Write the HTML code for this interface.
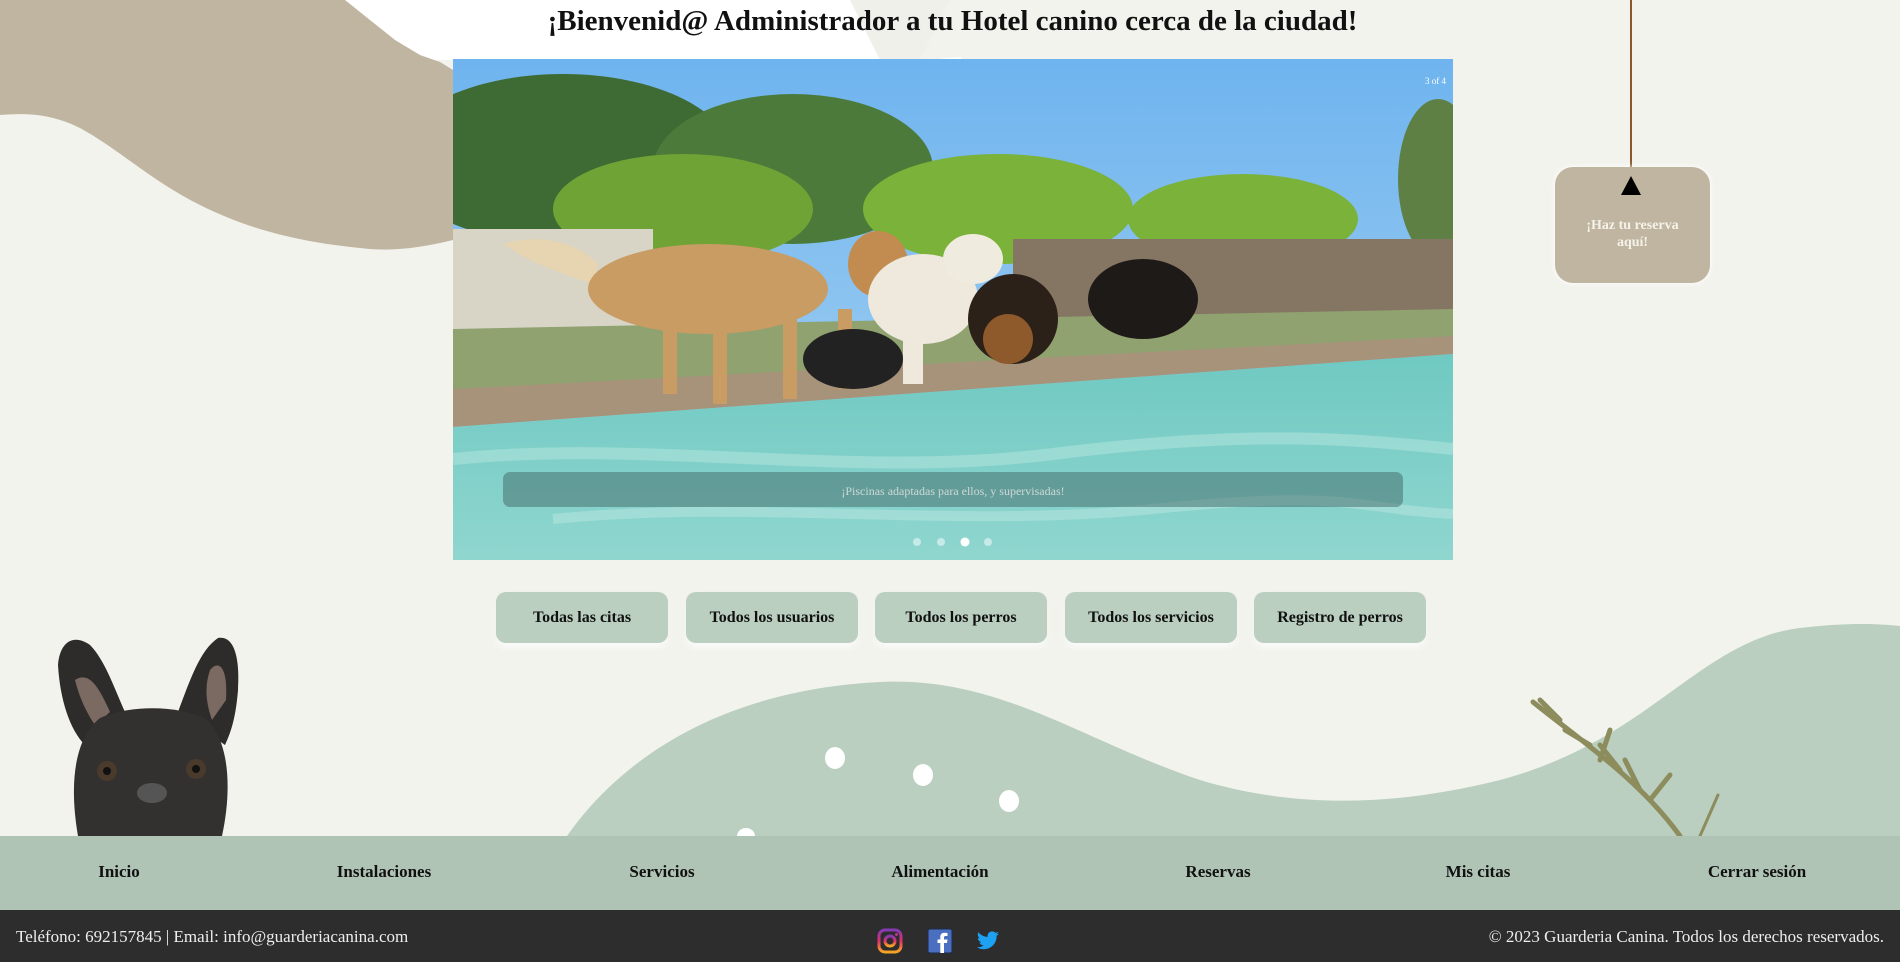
<!DOCTYPE html>
<html><head><meta charset="utf-8"><style>
*{margin:0;padding:0;box-sizing:border-box}
body{width:1900px;height:962px;overflow:hidden;background:#f3f3ee;font-family:"Liberation Serif",serif;position:relative}
.abs{position:absolute}
h1{position:absolute;top:5px;left:0;width:1905px;text-align:center;font-size:29px;font-weight:bold;color:#111;z-index:3}
.btn{position:absolute;top:592px;width:172px;height:51px;background:#bacfc0;border-radius:10px;box-shadow:0 4px 6px rgba(255,255,255,.9),0 2px 4px rgba(0,0,0,.08);font-weight:bold;font-size:16px;text-align:center;line-height:51px;color:#111}
.nav{position:absolute;top:836px;left:0;width:1900px;height:74px;background:#b0c4b6}
.nav span{position:absolute;top:26px;font-size:17px;font-weight:bold;color:#111;transform:translateX(-50%)}
.foot{position:absolute;top:910px;left:0;width:1900px;height:52px;background:#2d2d2d;color:#eee;font-size:17px}
</style></head><body>
<svg class="abs" style="left:0;top:0" width="1900" height="962">
<polygon points="340,0 1000,0 960,60 400,60" fill="#fff"/>
<polygon points="850,0 1000,0 940,60 880,60" fill="#f0f0ea"/>
<polygon points="950,0 1200,0 1200,40 920,60" fill="#f3f3ee"/>
<path d="M0,0 L345,0 L370,20 L395,40 L420,55 L440,62 L453,70 L453,240 C420,248 390,252 360,248 C300,242 250,230 200,205 C150,180 120,150 80,128 C50,113 25,113 0,115 Z" fill="#c0b5a0"/>
<path d="M567,836 C620,760 720,690 880,682 C1000,676 1080,740 1200,780 C1300,810 1400,805 1500,780 C1650,740 1700,640 1800,628 C1850,622 1880,624 1900,626 L1900,836 Z" fill="#bacfc0"/>
<ellipse cx="835" cy="758" rx="10" ry="11" fill="#fff"/>
<ellipse cx="923" cy="775" rx="10" ry="11" fill="#fff"/>
<ellipse cx="1009" cy="801" rx="10" ry="11" fill="#fff"/>
<ellipse cx="746" cy="836" rx="9" ry="8" fill="#fff"/>
<g stroke="#8d8c5c" stroke-width="5" stroke-linecap="round" fill="none">
<path d="M1533,702 C1580,740 1640,780 1680,836"/>
<path d="M1560,720 l-20,-20 M1590,745 l-25,-15 M1620,770 l-20,-25 M1600,760 l10,-30 M1640,790 l-15,-30 M1650,800 l20,-25"/>
<path d="M1700,836 L1718,795" stroke-width="3"/>
</g>
<g>
<path d="M58,665 C60,640 75,634 90,645 C105,660 115,690 125,712 L85,745 C70,730 60,700 58,665 Z" fill="#2e2c2a"/>
<path d="M178,712 C190,680 200,650 218,638 C235,635 240,660 238,690 C236,715 232,730 225,745 Z" fill="#2e2c2a"/>
<path d="M75,680 C80,700 88,715 95,725 L110,712 C100,690 90,670 75,680Z" fill="#7b6a62"/>
<path d="M210,670 C218,660 228,665 226,700 L212,720 C205,700 205,685 210,670Z" fill="#7b6a62"/>
<path d="M78,836 C70,790 72,740 100,718 C130,705 175,705 205,718 C230,740 232,790 222,836 Z" fill="#333130"/>
<circle cx="107" cy="771" r="10" fill="#4a3a2c"/><circle cx="196" cy="769" r="10" fill="#4a3a2c"/>
<circle cx="107" cy="771" r="4" fill="#111"/><circle cx="196" cy="769" r="4" fill="#111"/>
<ellipse cx="152" cy="793" rx="15" ry="10" fill="#555"/>
</g>
<line x1="1631" y1="0" x2="1631" y2="178" stroke="#8a5a2e" stroke-width="2"/>
</svg>
<h1>¡Bienvenid@ Administrador a tu Hotel canino cerca de la ciudad!</h1>
<div class="abs" style="left:1555px;top:167px;width:155px;height:116px;background:#c0b5a0;border-radius:18px;box-shadow:0 0 6px rgba(255,255,255,.9);color:#f5f2ea;font-weight:bold;font-size:14px;text-align:center;padding-top:50px;line-height:17px">¡Haz tu reserva<br>aquí!</div>
<svg class="abs" style="left:1620px;top:176px" width="22" height="20"><polygon points="11,0 21,19 1,19" fill="#000"/></svg>
<svg class="abs" style="left:453px;top:59px" width="1000" height="501" viewBox="0 0 1000 501" preserveAspectRatio="none">
<defs><linearGradient id="sky" x1="0" y1="0" x2="0" y2="1"><stop offset="0" stop-color="#6fb4ef"/><stop offset="1" stop-color="#a9d3f0"/></linearGradient>
<linearGradient id="wat" x1="0" y1="0" x2="0" y2="1"><stop offset="0" stop-color="#6fc9c2"/><stop offset="1" stop-color="#8fd6cf"/></linearGradient></defs>
<rect width="1000" height="501" fill="url(#sky)"/>
<ellipse cx="110" cy="100" rx="170" ry="85" fill="#3e6a34"/>
<ellipse cx="340" cy="110" rx="140" ry="75" fill="#4b7a3a"/>
<ellipse cx="230" cy="150" rx="130" ry="55" fill="#6fa336"/>
<ellipse cx="545" cy="150" rx="135" ry="55" fill="#7ab23a"/>
<ellipse cx="790" cy="160" rx="115" ry="45" fill="#7ab23a"/>
<ellipse cx="985" cy="120" rx="40" ry="80" fill="#5f8045"/>
<rect x="0" y="170" width="200" height="120" fill="#d8d5c6"/>
<rect x="560" y="180" width="440" height="90" fill="#857563"/>
<polygon points="0,270 1000,250 1000,285 0,335" fill="#8fa270"/>
<polygon points="0,330 1000,277 1000,295 0,368" fill="#a7937a"/>
<polygon points="0,368 1000,295 1000,501 0,501" fill="url(#wat)"/>
<path d="M0,400 C200,380 400,420 600,395 S900,380 1000,390" stroke="#a6e0d8" stroke-width="12" fill="none" opacity=".7"/>
<path d="M100,460 C300,440 500,470 700,450 S900,450 1000,455" stroke="#b3e4dc" stroke-width="10" fill="none" opacity=".6"/>
<path d="M50,185 C80,175 120,180 145,205 L140,225 C110,215 80,205 50,185Z" fill="#e7d4b0"/>
<ellipse cx="255" cy="230" rx="120" ry="45" fill="#c99c63"/>
<ellipse cx="425" cy="205" rx="30" ry="33" fill="#c28c50"/>
<rect x="210" y="250" width="14" height="85" fill="#c99c63"/><rect x="260" y="255" width="14" height="90" fill="#c99c63"/>
<rect x="330" y="250" width="14" height="90" fill="#c99c63"/><rect x="385" y="250" width="14" height="80" fill="#c99c63"/>
<ellipse cx="400" cy="300" rx="50" ry="30" fill="#222"/>
<ellipse cx="470" cy="240" rx="55" ry="45" fill="#eee9dc"/>
<ellipse cx="520" cy="200" rx="30" ry="25" fill="#f0ebdf"/>
<rect x="450" y="260" width="20" height="65" fill="#eee9dc"/>
<ellipse cx="560" cy="260" rx="45" ry="45" fill="#2c2118"/>
<ellipse cx="555" cy="280" rx="25" ry="25" fill="#8e5a2c"/>
<ellipse cx="690" cy="240" rx="55" ry="40" fill="#1d1a18"/>
<rect x="50" y="413" width="900" height="35" rx="7" fill="#3a5a5a" opacity=".45"/>
<text x="500" y="436" text-anchor="middle" font-family="Liberation Serif,serif" font-size="12" fill="#cfd8d6">¡Piscinas adaptadas para ellos, y supervisadas!</text>
<text x="993" y="25" text-anchor="end" font-family="Liberation Serif,serif" font-size="9" fill="#fff">3 of 4</text>
<circle cx="464" cy="483" r="4" fill="#fff" opacity=".5"/><circle cx="488" cy="483" r="4" fill="#fff" opacity=".5"/>
<circle cx="512" cy="483" r="4.5" fill="#fff"/><circle cx="535" cy="483" r="4" fill="#fff" opacity=".5"/>
</svg>
<div class="btn" style="left:496px">Todas las citas</div>
<div class="btn" style="left:686px">Todos los usuarios</div>
<div class="btn" style="left:875px">Todos los perros</div>
<div class="btn" style="left:1065px">Todos los servicios</div>
<div class="btn" style="left:1254px">Registro de perros</div>
<div class="nav">
<span style="left:119px">Inicio</span><span style="left:384px">Instalaciones</span><span style="left:662px">Servicios</span><span style="left:940px">Alimentación</span><span style="left:1218px">Reservas</span><span style="left:1478px">Mis citas</span><span style="left:1757px">Cerrar sesión</span>
</div>
<div class="foot">
<span class="abs" style="left:16px;top:17px">Teléfono: 692157845 | Email: info@guarderiacanina.com</span>
<span class="abs" style="right:16px;top:17px">© 2023 Guarderia Canina. Todos los derechos reservados.</span>
<svg class="abs" style="left:877px;top:18px" width="26" height="26"><defs><linearGradient id="ig" x1="0" y1="1" x2="0" y2="0"><stop offset="0" stop-color="#f5a623"/><stop offset=".5" stop-color="#e1306c"/><stop offset="1" stop-color="#833ab4"/></linearGradient></defs><rect x="2" y="2" width="22" height="22" rx="6" fill="none" stroke="url(#ig)" stroke-width="3"/><circle cx="13" cy="13" r="5" fill="none" stroke="url(#ig)" stroke-width="3"/><circle cx="19.5" cy="6.5" r="1.5" fill="#c13584"/></svg>
<svg class="abs" style="left:927px;top:18px" width="26" height="26"><rect x="1" y="1" width="24" height="24" rx="2" fill="#4a6fc0" stroke="#1e2a4a" stroke-width="1"/><path d="M17,25 V15 H20 L20.5,11.5 H17 V9.5 C17,8.5 17.5,8 18.5,8 H20.5 V5 C19.5,4.8 18.5,4.7 17.5,4.7 C14.8,4.7 13.3,6.3 13.3,9 V11.5 H10.5 V15 H13.3 V25 Z" fill="#fff"/></svg>
<svg class="abs" style="left:975px;top:19px" width="26" height="24" viewBox="0 0 24 24"><path d="M23,4.6 c-.8,.4-1.7,.6-2.6,.7 .9-.6 1.6-1.4 2-2.5 -.9,.5-1.9,.9-2.9,1.1 C18.6,3 17.4,2.4 16.1,2.4 c-2.5,0-4.5,2-4.5,4.5 0,.4 0,.7 .1,1 C7.9,7.8 4.6,6 2.4,3.3 c-.4,.7-.6,1.4-.6,2.3 0,1.6 .8,2.9 2,3.7 -.7,0-1.4-.2-2-.6 v.1 c0,2.2 1.6,4 3.6,4.4 -.4,.1-.8,.2-1.2,.2 -.3,0-.6,0-.8-.1 .6,1.8 2.2,3.1 4.2,3.1 -1.5,1.2-3.5,1.9-5.6,1.9 -.4,0-.7,0-1.1-.1 2,1.3 4.4,2 6.9,2 8.3,0 12.8-6.9 12.8-12.8 v-.6 C21.6,6.3 22.4,5.5 23,4.6z" fill="#1da1f2"/></svg>
</div>
</body></html>
